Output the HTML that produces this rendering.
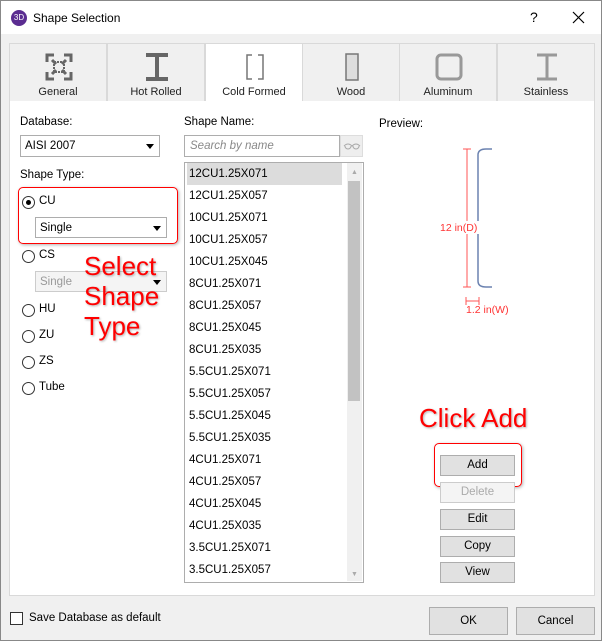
<!DOCTYPE html>
<html><head><meta charset="utf-8"><style>
*{box-sizing:border-box;margin:0;padding:0}
body{width:602px;height:641px;background:#f0f0f0;font-family:"Liberation Sans",sans-serif;font-size:11.5px;color:#000;position:relative;overflow:hidden;border:1px solid #888}
.a{position:absolute}
.title{left:0;top:0;width:600px;height:33px;background:#fff}
.tab{top:42px;height:59px;width:98px;border:1px solid #d9d9d9;background:#f0f0f0;text-align:center;font-size:11px;color:#222}
.tab span{position:absolute;left:0;right:0;top:42px}
.tab svg{position:absolute;left:34px;top:8px}
.panel{left:8px;top:100px;width:586px;height:495px;background:#fff;border:1px solid #d9d9d9;border-top:none}
.dd{border:1px solid #adadad;background:#fff;padding-left:4px;line-height:20px}
.dd:after{content:"";position:absolute;right:5px;top:8px;border:4px solid transparent;border-top:5px solid #000}
.rad{width:13px;height:13px;border:1px solid #333;border-radius:50%;background:#fff}
.lbl{font-size:11.5px}
.item{left:186px;width:155px;height:22px;line-height:22px;padding-left:2px;font-size:11.5px}
.btn{left:439px;width:75px;height:21px;border:1px solid #adadad;background:#e1e1e1;text-align:center;line-height:19px;font-size:11.5px}
.red{color:#f00;font-size:26px;text-shadow:1px 1px 2px rgba(0,0,0,.3);line-height:30px}
</style></head><body>
<div class="a title"></div>
<div class="a" style="left:10px;top:9px;width:16px;height:16px;border-radius:50%;background:#5b2d91;color:#fff;font-size:8px;text-align:center;line-height:16px">3D</div>
<div class="a" style="left:32px;top:10px;font-size:12px">Shape Selection</div>
<div class="a" style="left:529px;top:8px;font-size:14px">?</div>
<svg class="a" style="left:571px;top:10px" width="13" height="13"><path d="M1 1L12 12M12 1L1 12" stroke="#000" stroke-width="1.2"/></svg>

<div class="a tab" style="left:8px"><svg width="30" height="30" viewBox="0 0 30 30" fill="none" stroke="#666" stroke-width="3"><path d="M3 10V3h7M20 3h7v7M27 20v7h-7M10 27H3v-7M8 8l4 4M22 8l-4 4M8 22l4-4M22 22l-4-4"/><rect x="10" y="10" width="10" height="10" stroke-width="2" stroke-dasharray="2 1"/></svg><span>General</span></div>
<div class="a tab" style="left:106px"><svg width="30" height="30"><path d="M4 3h22M4 27h22M15 3v24" stroke="#666" stroke-width="4"/></svg><span>Hot Rolled</span></div>
<div class="a tab" style="left:204px;background:#fff;border-bottom:none;height:60px"><svg width="30" height="30" fill="none" stroke="#777" stroke-width="1.5"><path d="M12 3H7v24h5M18 3h5v24h-5"/></svg><span>Cold Formed</span></div>
<div class="a tab" style="left:301px"><svg width="30" height="30"><rect x="9" y="2" width="12" height="26" fill="#ddd" stroke="#777" stroke-width="1.5"/></svg><span>Wood</span></div>
<div class="a tab" style="left:398px"><svg width="30" height="30"><rect x="3" y="3" width="24" height="24" rx="4" fill="none" stroke="#999" stroke-width="3"/></svg><span>Aluminum</span></div>
<div class="a tab" style="left:496px"><svg width="30" height="30"><path d="M5 3h20M5 27h20M15 3v24" stroke="#999" stroke-width="3"/></svg><span>Stainless</span></div>

<div class="a panel"></div>
<div class="a lbl" style="left:19px;top:115px">Database:</div>
<div class="a dd" style="left:19px;top:134px;width:140px;height:22px">AISI 2007</div>
<div class="a lbl" style="left:19px;top:168px">Shape Type:</div>
<div class="a" style="left:17px;top:186px;width:160px;height:57px;border:1.5px solid #f00;border-radius:5px;box-shadow:1px 1px 3px rgba(0,0,0,.3)"></div>
<div class="a rad" style="left:21px;top:195px"><div class="a" style="left:3px;top:3px;width:5px;height:5px;border-radius:50%;background:#000"></div></div>
<div class="a lbl" style="left:38px;top:194px">CU</div>
<div class="a dd" style="left:34px;top:216px;width:132px;height:21px">Single</div>
<div class="a rad" style="left:21px;top:249px"></div><div class="a lbl" style="left:38px;top:248px">CS</div>
<div class="a dd" style="left:34px;top:270px;width:132px;height:21px;color:#999;background:#f4f4f4;border-color:#ccc">Single</div>
<div class="a rad" style="left:21px;top:303px"></div><div class="a lbl" style="left:38px;top:302px">HU</div>
<div class="a rad" style="left:21px;top:329px"></div><div class="a lbl" style="left:38px;top:328px">ZU</div>
<div class="a rad" style="left:21px;top:355px"></div><div class="a lbl" style="left:38px;top:354px">ZS</div>
<div class="a rad" style="left:21px;top:381px"></div><div class="a lbl" style="left:38px;top:380px">Tube</div>
<div class="a red" style="left:83px;top:250px">Select<br>Shape<br>Type</div>

<div class="a lbl" style="left:183px;top:115px">Shape Name:</div>
<div class="a" style="left:183px;top:134px;width:156px;height:22px;border:1px solid #adadad;color:#888;font-style:italic;padding-left:5px;line-height:20px">Search by name</div>
<div class="a" style="left:339px;top:134px;width:23px;height:22px;border:1px solid #ddd;background:#eee"><svg width="21" height="20"><path d="M3 10q4-4 8 0q4-4 8 0M4 10a3 3 0 0 0 6 0M12 10a3 3 0 0 0 6 0" fill="none" stroke="#aaa"/></svg></div>
<div class="a" style="left:183px;top:161px;width:180px;height:421px;border:1px solid #adadad;background:#fff"></div>
<div class="a" style="left:186px;top:162px;width:155px;height:22px;background:#dcdcdc"></div>
<div class="a" style="left:346px;top:162px;width:15px;height:418px;background:#f0f0f0"></div>
<div class="a" style="left:347px;top:180px;width:12px;height:220px;background:#c2c2c2"></div>
<div class="a" style="left:350px;top:168px;color:#aaa;font-size:7px">▲</div>
<div class="a" style="left:350px;top:570px;color:#aaa;font-size:7px">▼</div>
<div class="a item" style="top:162px">12CU1.25X071</div>
<div class="a item" style="top:184px">12CU1.25X057</div>
<div class="a item" style="top:206px">10CU1.25X071</div>
<div class="a item" style="top:228px">10CU1.25X057</div>
<div class="a item" style="top:250px">10CU1.25X045</div>
<div class="a item" style="top:272px">8CU1.25X071</div>
<div class="a item" style="top:294px">8CU1.25X057</div>
<div class="a item" style="top:316px">8CU1.25X045</div>
<div class="a item" style="top:338px">8CU1.25X035</div>
<div class="a item" style="top:360px">5.5CU1.25X071</div>
<div class="a item" style="top:382px">5.5CU1.25X057</div>
<div class="a item" style="top:404px">5.5CU1.25X045</div>
<div class="a item" style="top:426px">5.5CU1.25X035</div>
<div class="a item" style="top:448px">4CU1.25X071</div>
<div class="a item" style="top:470px">4CU1.25X057</div>
<div class="a item" style="top:492px">4CU1.25X045</div>
<div class="a item" style="top:514px">4CU1.25X035</div>
<div class="a item" style="top:536px">3.5CU1.25X071</div>
<div class="a item" style="top:558px">3.5CU1.25X057</div>

<div class="a lbl" style="left:378px;top:117px">Preview:</div>
<svg class="a" style="left:420px;top:140px" width="110" height="180">
<path d="M71 8H65Q57 8 57 14V140Q57 146 65 146H71" fill="none" stroke="#6b82b0" stroke-width="1.5"/>
<path d="M46 8V146M42 8h8M42 146h8M45 156v8M58 156v8M45 160H58" stroke="#f55" stroke-width="1"/>
<rect x="18" y="80" width="42" height="13" fill="#fff"/>
<text x="19" y="90" font-size="10.5" fill="#f33" font-family="Liberation Sans">12 in(D)</text>
<text x="45" y="172" font-size="10.5" fill="#f33" font-family="Liberation Sans">1.2 in(W)</text>
</svg>

<div class="a red" style="left:418px;top:402px">Click Add</div>
<div class="a" style="left:433px;top:442px;width:88px;height:44px;border:1.5px solid #f00;border-radius:5px;box-shadow:1px 1px 3px rgba(0,0,0,.3)"></div>
<div class="a btn" style="top:454px">Add</div>
<div class="a btn" style="top:481px;color:#aaa;background:#f4f4f4;border-color:#ccc">Delete</div>
<div class="a btn" style="top:508px">Edit</div>
<div class="a btn" style="top:535px">Copy</div>
<div class="a btn" style="top:561px">View</div>

<div class="a" style="left:9px;top:611px;width:13px;height:13px;border:1px solid #333;background:#fff"></div>
<div class="a lbl" style="left:28px;top:611px">Save Database as default</div>
<div class="a btn" style="left:428px;top:606px;width:79px;height:28px;line-height:26px">OK</div>
<div class="a btn" style="left:515px;top:606px;width:79px;height:28px;line-height:26px">Cancel</div>
</body></html>
